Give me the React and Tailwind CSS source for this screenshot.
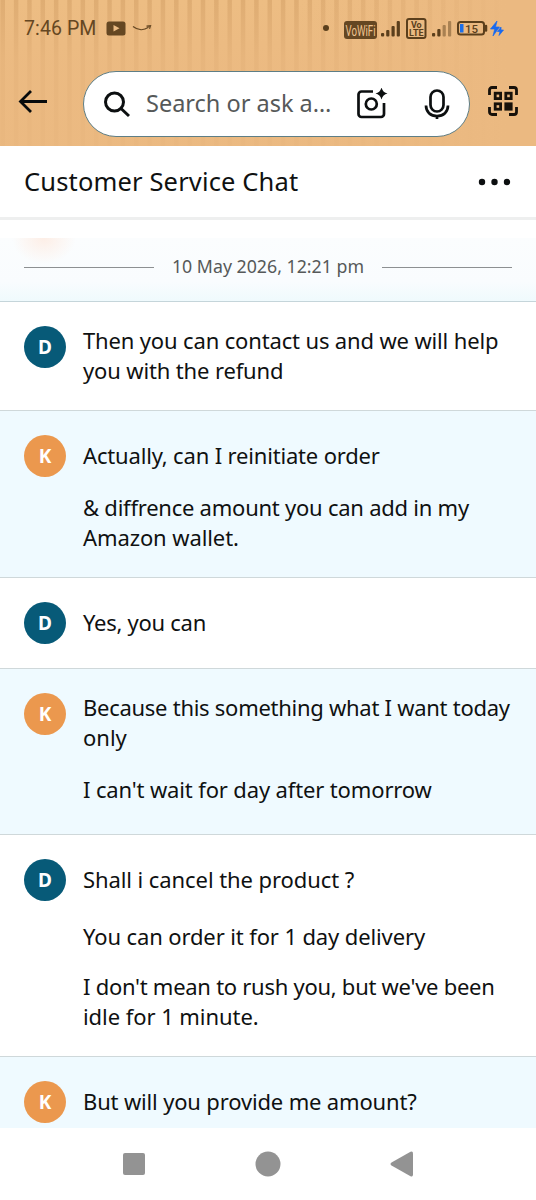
const messages = [
  { who: "D", row: "h-[109px]", blocks: [{ gap: "", lines: [["Then you can contact us and we will help", "tracking-[-0.150px]"], ["you with the refund", "tracking-[-0.140px]"]] }] },
  { who: "K", row: "h-[167px]", blocks: [{ gap: "pt-1.5", lines: [["Actually, can I reinitiate order", "tracking-[-0.170px]"]] }, { gap: "pt-[22px]", lines: [["& diffrence amount you can add in my", "tracking-[-0.240px]"], ["Amazon wallet.", "tracking-[-0.100px]"]] }] },
  { who: "D", row: "h-[91px]", blocks: [{ gap: "pt-1.5", lines: [["Yes, you can", "tracking-[-0.270px]"]] }] },
  { who: "K", row: "h-[166px]", blocks: [{ gap: "", lines: [["Because this something what I want today", "tracking-[-0.270px]"], ["only", "tracking-normal"]] }, { gap: "pt-[22px]", lines: [["I can't wait for day after tomorrow", "tracking-[-0.140px]"]] }] },
  { who: "D", row: "h-[222px]", blocks: [{ gap: "pt-1.5", lines: [["Shall i cancel the product ?", "tracking-[-0.080px]"]] }, { gap: "pt-[27px]", lines: [["You can order it for 1 day delivery", "tracking-[-0.120px]"]] }, { gap: "pt-[20px]", lines: [["I don't mean to rush you, but we've been", "tracking-[-0.270px]"], ["idle for 1 minute.", "tracking-[-0.060px]"]] }] },
  { who: "K", row: "h-[72px]", last: true, blocks: [{ gap: "pt-1.5", lines: [["But will you provide me amount?", "tracking-[-0.160px]"]] }] },
];

function StatusBar() {
  return (
    <div className="flex h-14 items-center pl-6 font-[Roboto,sans-serif] text-[#654722]">
      <span className="w-[82px] whitespace-nowrap pt-px text-[19.500px] leading-none tracking-[0.100px]">7:46 PM</span>
      <svg className="block" width="48" height="20" viewBox="0 0 48 20">
        <rect x="0.500" y="3.500" width="19" height="14" rx="2.500" fill="#654722" />
        <path d="M7.500 7v6.500l6-3.200z" fill="#ecbc84" />
        <path d="M27 8.500c5 4 11 4 15.500 0.800M40.500 8.200l4-.4-1 3" fill="none" stroke="#654722" strokeWidth="1.200" />
      </svg>
      <svg className="ml-[166px] block" width="184" height="24" viewBox="320 16 184 24">
        <circle cx="326" cy="28" r="3" fill="#5b3f1c" />
        <rect x="344" y="21" width="33" height="18" rx="3" fill="#654722" />
        <text x="345.500" y="36" fontSize="14" fill="#efc491" textLength="30" lengthAdjust="spacingAndGlyphs" fontFamily="Roboto">VoWiFi</text>
        <g fill="#5b3f1c">
          <rect x="381" y="33" width="3.200" height="3.500" rx="1" />
          <rect x="386.200" y="30" width="3.200" height="6.500" rx="1" />
          <rect x="391.500" y="26" width="3.200" height="10.500" rx="1" />
          <rect x="396.700" y="21" width="3.200" height="15.500" rx="1" />
          <rect x="432" y="33" width="3.200" height="3.500" rx="1" />
          <rect x="437.300" y="29" width="3.200" height="7.500" rx="1" />
          <g opacity="0.45"><rect x="442.600" y="25" width="3.200" height="11.500" rx="1" /><rect x="448" y="21" width="3.200" height="15.500" rx="1" /></g>
        </g>
        <rect x="407" y="19" width="18.500" height="19" rx="2" fill="none" stroke="#5b3f1c" strokeWidth="2" />
        <g fill="#5b3f1c" fontFamily="Roboto" fontWeight="700" fontSize="9" textAnchor="middle"><text x="416.300" y="27.800">Vo</text><text x="416.300" y="35.600" textLength="14.500" lengthAdjust="spacingAndGlyphs">LTE</text></g>
        <rect x="458" y="22" width="26" height="12.500" rx="2.500" fill="none" stroke="#5b3f1c" strokeWidth="2" />
        <path d="M486 26v4.500" stroke="#5b3f1c" strokeWidth="2.500" strokeLinecap="round" />
        <rect x="460" y="24" width="3.500" height="8.500" fill="#1c6ee8" />
        <text x="471.500" y="32.500" fontSize="11.500" fontWeight="500" textAnchor="middle" fill="#5b3f1c" fontFamily="Roboto">15</text>
        <path d="M497 21l-6.500 8h4.200l-1.700 7 6.500-9h-4zM501 27l-3.500 4.500h2.500l-1 4 4.500-5.500h-2.500z" fill="#1769f0" stroke="#1769f0" strokeWidth="0.700" />
      </svg>
    </div>
  );
}

function SearchRow() {
  return (
    <div className="flex h-[90px] items-start pl-[18px] pt-[15px]">
      <svg className="mt-4 block" width="30" height="28" viewBox="0 0 30 28" fill="none" stroke="#080b0c" strokeWidth="2.800">
        <path d="M29 14.500H3M13 4L2.500 14.500 13 25" />
      </svg>
      <div className="ml-[35px] flex h-[66px] w-[387px] items-center rounded-full border-[1.500px] border-[#5e7e86] bg-white">
        <svg className="ml-5 block" width="27" height="28" viewBox="0 0 27 28" fill="none" stroke="#0c0f10" strokeWidth="3">
          <circle cx="10.500" cy="12" r="9" /><path d="M17 18.500l8 7.500" />
        </svg>
        <span className="ml-[15px] w-[210px] whitespace-nowrap text-[23.500px] text-[#565959]">Search or ask a…</span>
        <svg className="block" width="32" height="32" viewBox="0 0 32 32" fill="none" stroke="#0c0f10" strokeWidth="2.700">
          <path d="M17 3.500H5.500a3 3 0 0 0-3 3V26a3 3 0 0 0 3 3H25a3 3 0 0 0 3-3V15" /><circle cx="15.300" cy="16" r="5.500" />
          <path d="M25.500-.5q1.300 5 6 6-4.700 1-6 6-1.300-5-6-6 4.700-1 6-6z" fill="#0c0f10" stroke="none" />
        </svg>
        <svg className="ml-[36px] block" width="26" height="32" viewBox="0 0 26 32" fill="none" stroke="#0c0f10" strokeWidth="2.700">
          <rect x="6.500" y="2.500" width="13" height="21" rx="6.500" /><path d="M2 17.500c0 6.500 4.500 10.500 11 10.500s11-4 11-10.500M13 28v3" />
        </svg>
      </div>
      <svg className="ml-[17px] mt-[14px] block" width="32" height="32" viewBox="0 0 32 32" fill="none" stroke="#17110a" strokeWidth="2.800">
        <path d="M2.500 10V5a2.500 2.500 0 0 1 2.500-2.500h5M22 2.500h5A2.500 2.500 0 0 1 29.500 5v5M29.500 22v5a2.500 2.500 0 0 1-2.500 2.500h-5M10 29.500H5A2.500 2.500 0 0 1 2.500 27v-5" />
        <rect x="8.200" y="8.200" width="5.400" height="5.400" /><rect x="18.800" y="8.200" width="5.400" height="5.400" /><rect x="8.200" y="18.800" width="5.400" height="5.400" /><rect x="18.800" y="18.800" width="5.400" height="5.400" fill="#17110a" />
      </svg>
    </div>
  );
}

function Message({ m }) {
  const user = m.who === "K";
  return (
    <article className={`flex shrink-0 items-start pl-6 pt-6 ${m.row} ${user ? "bg-[#effaff]" : "bg-white"} ${m.last ? "" : "border-b-[1.500px] border-[#cfd8da]"}`}>
      <div className={`flex size-[42px] shrink-0 items-center justify-center rounded-full text-[19px] font-bold text-white ${user ? "bg-[#eb984e]" : "bg-[#075a78]"}`}>{m.who}</div>
      <div className="-mt-px ml-[17px] whitespace-nowrap text-[22px] leading-[30px] text-[#0f1111]">
        {m.blocks.map((b) => <div key={b.lines[0][0]} className={b.gap}>{b.lines.map(([text, tracking]) => <p key={text} className={tracking}>{text}</p>)}</div>)}
      </div>
    </article>
  );
}

export default function App() {
  return (
    <div className="flex h-[1200px] w-[536px] flex-col overflow-hidden bg-white font-['Noto_Sans',sans-serif]">
      <header className="h-[146px] shrink-0 bg-[#ebb981] bg-[linear-gradient(to_bottom,#ebb98100,#ebb981b0_60px,#ebb981e0),linear-gradient(to_right,#ebb98100_55%,#ebb981_95%),repeating-linear-gradient(to_right,#edbd83_0px,#dfad73_1px,#dfad73_4.500px,#edbd83_5.500px,#edbd83_13.350px)]">
        <StatusBar />
        <SearchRow />
      </header>
      <div className="flex h-[74px] shrink-0 items-center justify-between border-b-[3px] border-[#eeefef] pl-6 pr-[24px]">
        <h1 className="text-[25.500px] tracking-[0.150px] text-[#0f1111]">Customer Service Chat</h1>
        <svg width="34" height="8" viewBox="0 0 34 8" fill="#0c0f10"><circle cx="4" cy="4" r="3.200" /><circle cx="16.500" cy="4" r="3.200" /><circle cx="29" cy="4" r="3.200" /></svg>
      </div>
      <main className="flex h-[908px] shrink-0 flex-col overflow-hidden pt-[18px]">
        <div className="flex h-[64px] shrink-0 items-center border-b border-[#c5d5da] bg-[radial-gradient(ellipse_32px_26px_at_44px_0px,#fdeee6,#fdeee600),linear-gradient(to_bottom,#fbfdfe,#f9fcfe_70%,#effafd)] px-6 pb-1">
          <div className="h-px flex-1 bg-[#8d9092]" />
          <span className="-mt-0.5 w-[228px] whitespace-nowrap text-center text-[17.750px] text-[#565959]">10 May 2026, 12:21 pm</span>
          <div className="h-px flex-1 bg-[#8d9092]" />
        </div>
        {messages.map((m) => <Message key={m.blocks[0].lines[0][0]} m={m} />)}
      </main>
      <nav className="flex h-[72px] shrink-0 items-center justify-center gap-[109px] bg-white">
        <svg width="24" height="24" fill="#939393"><rect x="1" y="1" width="22" height="22" rx="2" /></svg>
        <svg width="26" height="26" fill="#939393"><circle cx="13" cy="13" r="12.500" /></svg>
        <svg width="24" height="26" fill="#939393"><path d="M1.500 11.500L20.500.8q2.500-1 2.500 1.700v21q0 2.700-2.500 1.700L1.500 14.500q-2-1.500 0-3z" /></svg>
      </nav>
    </div>
  );
}
